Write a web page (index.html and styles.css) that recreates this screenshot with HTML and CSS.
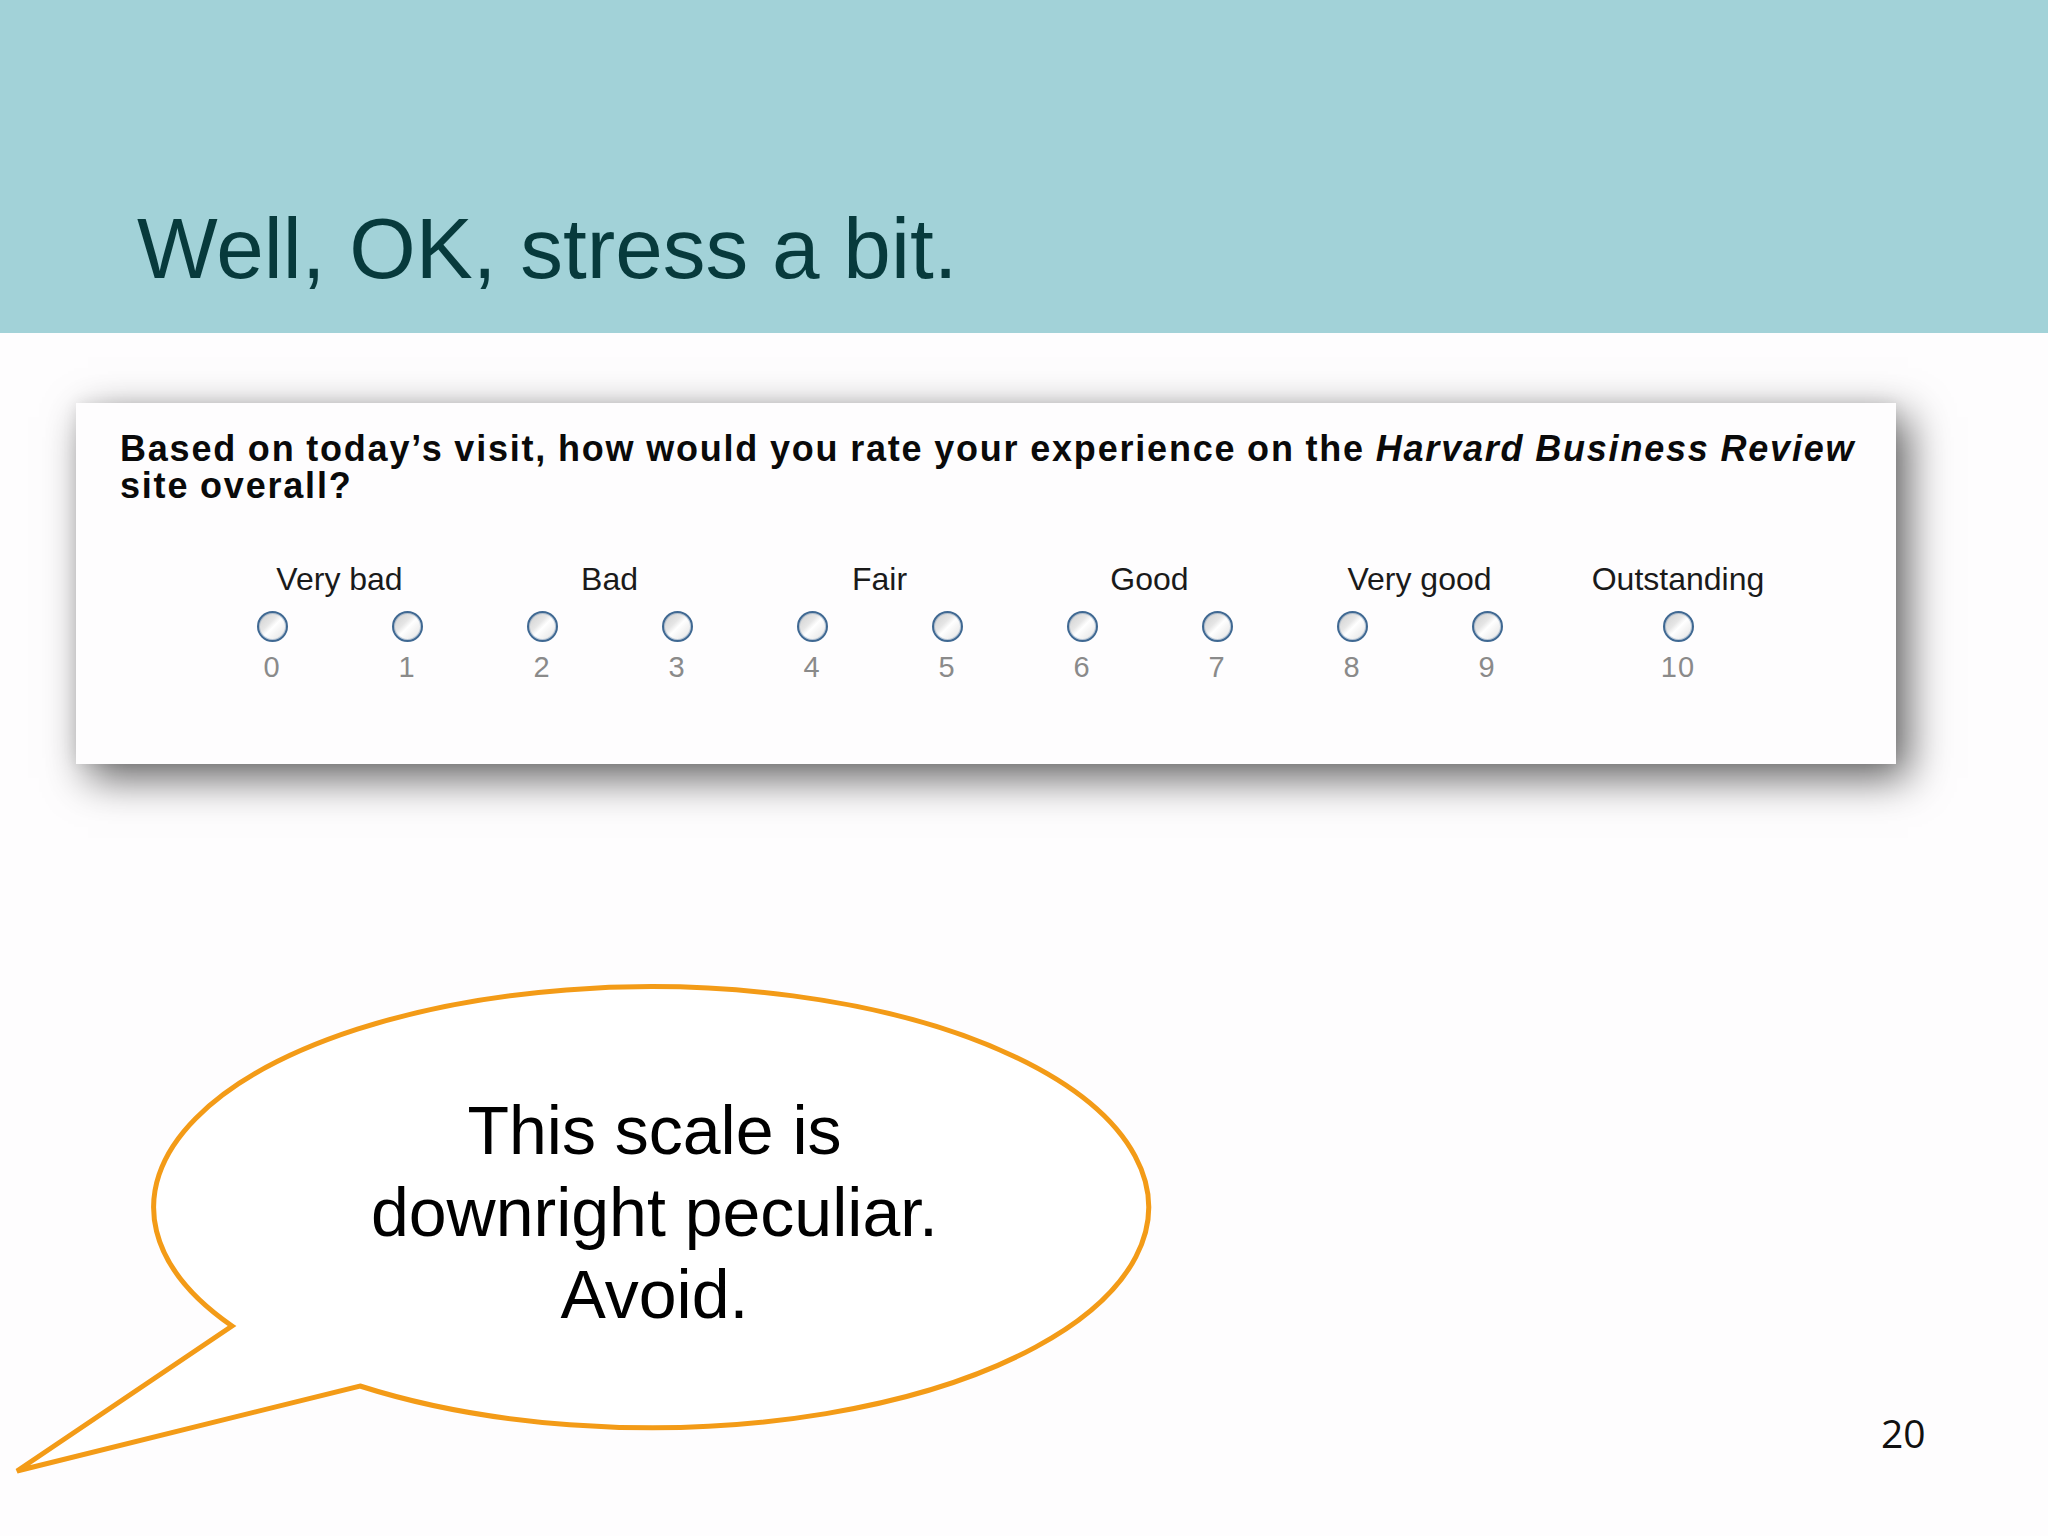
FILE: index.html
```html
<!DOCTYPE html>
<html lang="en">
<head>
<meta charset="utf-8">
<title>Well, OK, stress a bit.</title>
<link rel="stylesheet" href="styles.css">
</head>
<body>
<div class="slide">
  <header class="band">
    <h1 class="title">Well, OK, stress a bit.</h1>
  </header>

  <section class="card">
    <p class="question">Based on today’s visit, how would you rate your experience on the <em>Harvard Business Review</em><br>site overall?</p>
    <div class="scale">
      <div class="group">
        <div class="label">Very bad</div>
        <div class="cells">
          <div class="cell"><span class="radio"></span><span class="num">0</span></div>
          <div class="cell"><span class="radio"></span><span class="num">1</span></div>
        </div>
      </div>
      <div class="group">
        <div class="label">Bad</div>
        <div class="cells">
          <div class="cell"><span class="radio"></span><span class="num">2</span></div>
          <div class="cell"><span class="radio"></span><span class="num">3</span></div>
        </div>
      </div>
      <div class="group">
        <div class="label">Fair</div>
        <div class="cells">
          <div class="cell"><span class="radio"></span><span class="num">4</span></div>
          <div class="cell"><span class="radio"></span><span class="num">5</span></div>
        </div>
      </div>
      <div class="group">
        <div class="label">Good</div>
        <div class="cells">
          <div class="cell"><span class="radio"></span><span class="num">6</span></div>
          <div class="cell"><span class="radio"></span><span class="num">7</span></div>
        </div>
      </div>
      <div class="group">
        <div class="label">Very good</div>
        <div class="cells">
          <div class="cell"><span class="radio"></span><span class="num">8</span></div>
          <div class="cell"><span class="radio"></span><span class="num">9</span></div>
        </div>
      </div>
      <div class="group group-last">
        <div class="label">Outstanding</div>
        <div class="cells">
          <div class="cell cell-wide"><span class="radio"></span><span class="num">10</span></div>
        </div>
      </div>
    </div>
  </section>

  <div class="bubble">
    <svg class="bubble-shape" width="1200" height="560" viewBox="0 0 1200 560" xmlns="http://www.w3.org/2000/svg">
      <path d="M 232 366 A 497.5 220.5 0 1 1 360 426 L 17 511 Z" fill="#ffffff" stroke="#f39b17" stroke-width="5" stroke-linejoin="miter"/>
    </svg>
    <p class="bubble-text">This scale is<br>downright peculiar.<br>Avoid.</p>
  </div>

  <div class="page-num">20</div>
</div>
</body>
</html>
```

FILE: styles.css
```css
* { box-sizing: border-box; }

html, body {
  margin: 0;
  padding: 0;
  background: #ffffff;
}

.slide {
  position: relative;
  width: 2048px;
  height: 1536px;
  overflow: hidden;
  background: #fefdfe;
  font-family: "Liberation Sans", Arial, sans-serif;
}

.band {
  height: 333px;
  background: #a2d2d8;
  padding: 206px 0 0 137px;
}

.title {
  margin: 0;
  font-weight: normal;
  font-size: 85.5px;
  line-height: 86px;
  color: #073a3c;
  letter-spacing: 0;
}

.card {
  margin: 70px 0 0 76px;
  width: 1820px;
  height: 361px;
  background: #fefdfe;
  padding: 27px 0 0 44px;
  box-shadow: 12px 14px 40px rgba(0, 0, 0, 0.62), 0 0 14px rgba(0, 0, 0, 0.07);
}

.question {
  margin: 0;
  font-family: "Liberation Sans", Arial, sans-serif;
  font-weight: bold;
  font-size: 36px;
  line-height: 37px;
  color: #0a0a0a;
  white-space: nowrap;
  letter-spacing: 1.8px;
  word-spacing: -1px;
}

.question em {
  font-style: italic;
}

.scale {
  display: flex;
  margin: 59px 0 0 84.5px;
}

.group {
  display: flex;
  flex-direction: column;
  align-items: center;
  width: 270px;
}

.group-last {
  width: 247px;
}

.label {
  font-size: 32px;
  line-height: 32px;
  color: #1a1a1a;
  white-space: nowrap;
}

.cells {
  display: flex;
  width: 100%;
  margin-top: 16px;
}

.cell {
  flex: 1;
  display: flex;
  flex-direction: column;
  align-items: center;
}

.radio {
  display: block;
  width: 31px;
  height: 31px;
  border-radius: 50%;
  border: 2px solid #3f6892;
  background: linear-gradient(135deg, #cdcdcd 0%, #e6e6e6 38%, #ffffff 52%, #f3f3f3 70%, #e0e0e0 100%);
  box-shadow: inset 0 0 0 1px rgba(120, 150, 185, 0.45);
}

.num {
  display: block;
  margin-top: 11px;
  font-size: 29px;
  line-height: 29px;
  color: #8a8a8a;
  letter-spacing: 1px;
}

.bubble {
  position: absolute;
  left: 0;
  top: 960px;
  width: 1200px;
  height: 560px;
}

.bubble-shape {
  position: absolute;
  left: 0;
  top: 0;
}

.bubble-text {
  position: absolute;
  left: 0;
  top: 129px;
  width: 1309px;
  margin: 0;
  text-align: center;
  font-size: 68px;
  line-height: 82px;
  color: #000000;
}

.page-num {
  position: absolute;
  left: 1881px;
  top: 1413px;
  font-family: "Open Sans", "Noto Sans", sans-serif;
  font-size: 39px;
  line-height: 39px;
  color: #111111;
}
```
